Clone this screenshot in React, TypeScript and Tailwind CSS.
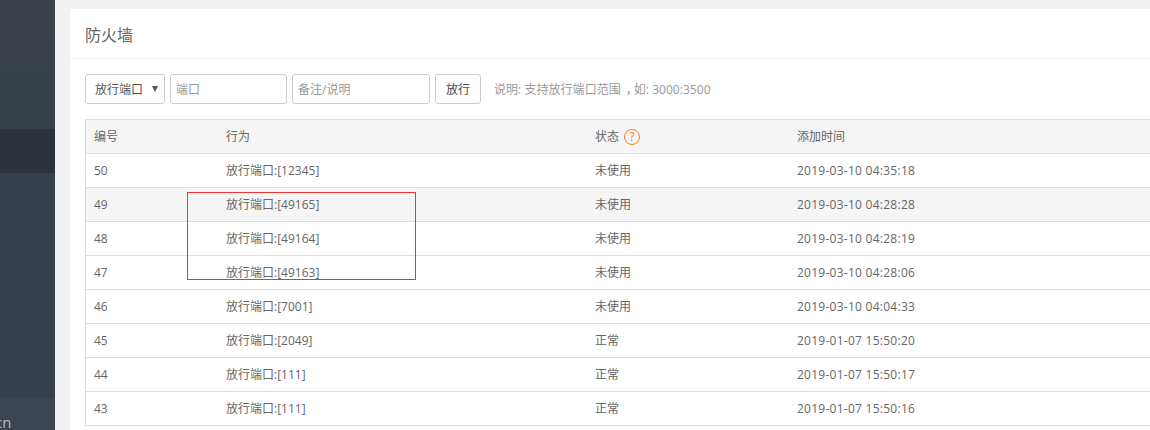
const font = "font-['Open_Sans','Noto_Sans_CJK_SC',sans-serif]";

const rows = [
  { id: 50, port: "12345", status: "未使用", time: "2019-03-10 04:35:18" },
  { id: 49, port: "49165", status: "未使用", time: "2019-03-10 04:28:28", hover: true },
  { id: 48, port: "49164", status: "未使用", time: "2019-03-10 04:28:19" },
  { id: 47, port: "49163", status: "未使用", time: "2019-03-10 04:28:06" },
  { id: 46, port: "7001", status: "未使用", time: "2019-03-10 04:04:33" },
  { id: 45, port: "2049", status: "正常", time: "2019-01-07 15:50:20" },
  { id: 44, port: "111", status: "正常", time: "2019-01-07 15:50:17" },
  { id: 43, port: "111", status: "正常", time: "2019-01-07 15:50:16" },
];

function Sidebar() {
  return (
    <aside className="w-[55px] shrink-0 h-full flex flex-col bg-[#36404a] overflow-hidden">
      <div className="h-[129px] bg-gradient-to-b from-[#3a4149] to-[#37404a]" />
      <div className="h-[44px] bg-[#2c333c]" />
      <div className="flex-1" />
      <div className="h-[32px] bg-[#3c4550] overflow-hidden pt-[14px] text-[15px] leading-[20px] text-[#b4bac0]">
        <span className="block -ml-[5px] whitespace-nowrap">cn</span>
      </div>
    </aside>
  );
}

function Table() {
  return (
    <div className="ml-[15px] border-l border-[#ddd] text-[12px] text-[#666]">
      <div className="h-[35px] flex items-center bg-[#f5f5f5] border-t border-b border-[#ddd]">
        <div className="w-[140px] pl-[8px]">编号</div>
        <div className="w-[369px]">行为</div>
        <div className="w-[202px] flex items-center gap-[5px]">
          状态
          <span className="w-[16px] h-[16px] rounded-full border border-[#f7831f] text-[#f7831f] text-[12px] leading-[14px] text-center">?</span>
        </div>
        <div>添加时间</div>
      </div>
      {rows.map((r) => (
        <div key={r.id} className={`h-[34px] flex items-center border-b border-[#ddd] ${r.hover ? "bg-[#f5f5f5]" : ""}`}>
          <div className="w-[140px] pl-[8px]">{r.id}</div>
          <div className="w-[369px]">放行端口:[{r.port}]</div>
          <div className="w-[202px]">{r.status}</div>
          <div className="tracking-[0.26px]">{r.time}</div>
        </div>
      ))}
    </div>
  );
}

export default function App() {
  return (
    <div className={`relative w-[1150px] h-[430px] flex overflow-hidden bg-[#f1f1f1] ${font}`}>
      <Sidebar />
      <main className="flex-1 pl-[15px] pt-[9px]">
        <div className="bg-white h-[600px]">
          <div className="h-[50px] pl-[15px] pt-[2px] flex items-center text-[16px] text-[#666] border-b border-[#eee]">防火墙</div>
          <div className="pl-[15px] pt-[15px] h-[60px] flex items-start text-[12px] text-[#555]">
            <div className="w-[80px] h-[30px] border border-[#ccc] rounded-[3px] flex items-center pl-[9px] pt-[1px] relative">
              放行端口
              <span className="absolute right-[6px] top-[11px] w-0 h-0 border-l-[3.5px] border-r-[3.5px] border-t-[6px] border-l-transparent border-r-transparent border-t-[#555]" />
            </div>
            <input placeholder="端口" className="ml-[5px] w-[117px] h-[30px] border border-[#ccc] rounded-[3px] px-[5px] pt-[1px] placeholder:text-[#999] outline-none" />
            <input placeholder="备注/说明" className="ml-[5px] w-[138px] h-[30px] border border-[#ccc] rounded-[3px] px-[5px] pt-[1px] placeholder:text-[#999] outline-none" />
            <button className="ml-[5px] w-[46px] h-[30px] border border-[#ccc] rounded-[3px] bg-white text-[#444] pt-[1px]">放行</button>
            <span className="ml-[13px] leading-[32px] text-[#999] tracking-[0.04px]">
              说明: 支持放行端口范围<span className="inline-flex w-[13px] pl-[5px] overflow-hidden">，</span>如: 3000:3500
            </span>
          </div>
          <Table />
        </div>
      </main>
      {/* red annotation box drawn over the table */}
      <div className="absolute left-[187px] top-[192px] w-[229px] h-[88px] border border-[#e33] pointer-events-none" />
    </div>
  );
}
